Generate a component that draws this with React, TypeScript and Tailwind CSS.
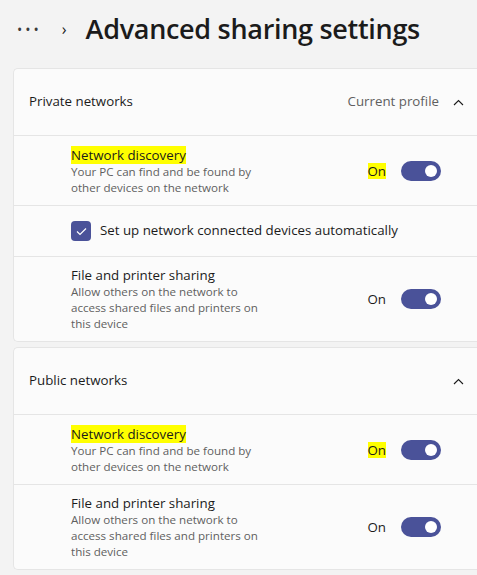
const font = { fontFamily: '"Open Sans", "Noto Sans", sans-serif' };

function Toggle({ mark }: { mark?: boolean }) {
  return (
    <div className="flex items-center gap-[15px]">
      <span className={`text-[13.3px] leading-[16px] text-[#1b1b1b] ${mark ? 'bg-[#ffff00]' : ''}`}>On</span>
      <div className="flex h-[20px] w-[40px] items-center justify-end rounded-full bg-[#4a5299] pr-[4px]">
        <div className="h-[12px] w-[12px] rounded-full bg-white" />
      </div>
    </div>
  );
}

function Chevron() {
  return (
    <svg width="11" height="7" viewBox="0 0 11 7" fill="none">
      <path d="M1 6 5.5 1.5 10 6" stroke="#1b1b1b" strokeWidth="1.1" />
    </svg>
  );
}

function DiscoveryRow() {
  return (
    <div className="flex h-[70px] items-center justify-between border-t border-[#e5e5e5] pl-[57px] pr-[36px]">
      <div className="flex flex-col">
        <span className="self-start bg-[#ffff00] text-[13.3px] leading-[18px] text-[#1b1b1b]">Network discovery</span>
        <span className="text-[11.6px] leading-[16px] text-[#5f5f5f]">
          Your PC can find and be found by
          <br />
          other devices on the network
        </span>
      </div>
      <Toggle mark />
    </div>
  );
}

function SharingRow() {
  return (
    <div className="flex h-[85px] items-center justify-between border-t border-[#e5e5e5] pl-[57px] pr-[36px]">
      <div className="flex flex-col">
        <span className="text-[13.3px] leading-[18px] text-[#1b1b1b]">File and printer sharing</span>
        <span className="text-[11.6px] leading-[16px] text-[#5f5f5f]">
          Allow others on the network to
          <br />
          access shared files and printers on
          <br />
          this device
        </span>
      </div>
      <Toggle />
    </div>
  );
}

export default function App() {
  return (
    <div className="h-[575px] w-full overflow-hidden bg-[#f3f3f3]" style={font}>
      <div className="flex h-[68px] items-center pb-[10px]">
        <span className="ml-[17px] text-[14px] tracking-[3px] text-[#3b3b3b]">•••</span>
        <span className="ml-[20px] text-[16px] text-[#1b1b1b]">›</span>
        <h1 className="ml-[19px] text-[27px] font-semibold tracking-[-0.3px] text-[#1b1b1b]">
          Advanced sharing settings
        </h1>
      </div>

      <div className="ml-[13px] flex w-[464px] flex-col gap-[5px]">
        <div className="rounded-l-[5px] border border-r-0 border-[#e5e5e5] bg-[#fbfbfb]">
          <div className="flex h-[66px] items-center justify-between pl-[15px] pr-[13px]">
            <span className="text-[13.3px] text-[#1b1b1b]">Private networks</span>
            <div className="flex items-center gap-[14px]">
              <span className="text-[13.3px] text-[#5f5f5f]">Current profile</span>
              <Chevron />
            </div>
          </div>
          <DiscoveryRow />
          <div className="flex h-[51px] items-center gap-[9px] border-t border-[#e5e5e5] pl-[57px]">
            <div className="flex h-[20px] w-[20px] items-center justify-center rounded-[4px] bg-[#4a5299]">
              <svg width="11" height="9" viewBox="0 0 11 9" fill="none">
                <path d="M1 4.5 4 7.5 10 1.5" stroke="white" strokeWidth="1.2" />
              </svg>
            </div>
            <span className="text-[13.3px] text-[#1b1b1b]">Set up network connected devices automatically</span>
          </div>
          <SharingRow />
        </div>

        <div className="rounded-l-[5px] border border-r-0 border-[#e5e5e5] bg-[#fbfbfb]">
          <div className="flex h-[66px] items-center justify-between pl-[15px] pr-[13px]">
            <span className="text-[13.3px] text-[#1b1b1b]">Public networks</span>
            <Chevron />
          </div>
          <DiscoveryRow />
          <SharingRow />
        </div>
      </div>
    </div>
  );
}
